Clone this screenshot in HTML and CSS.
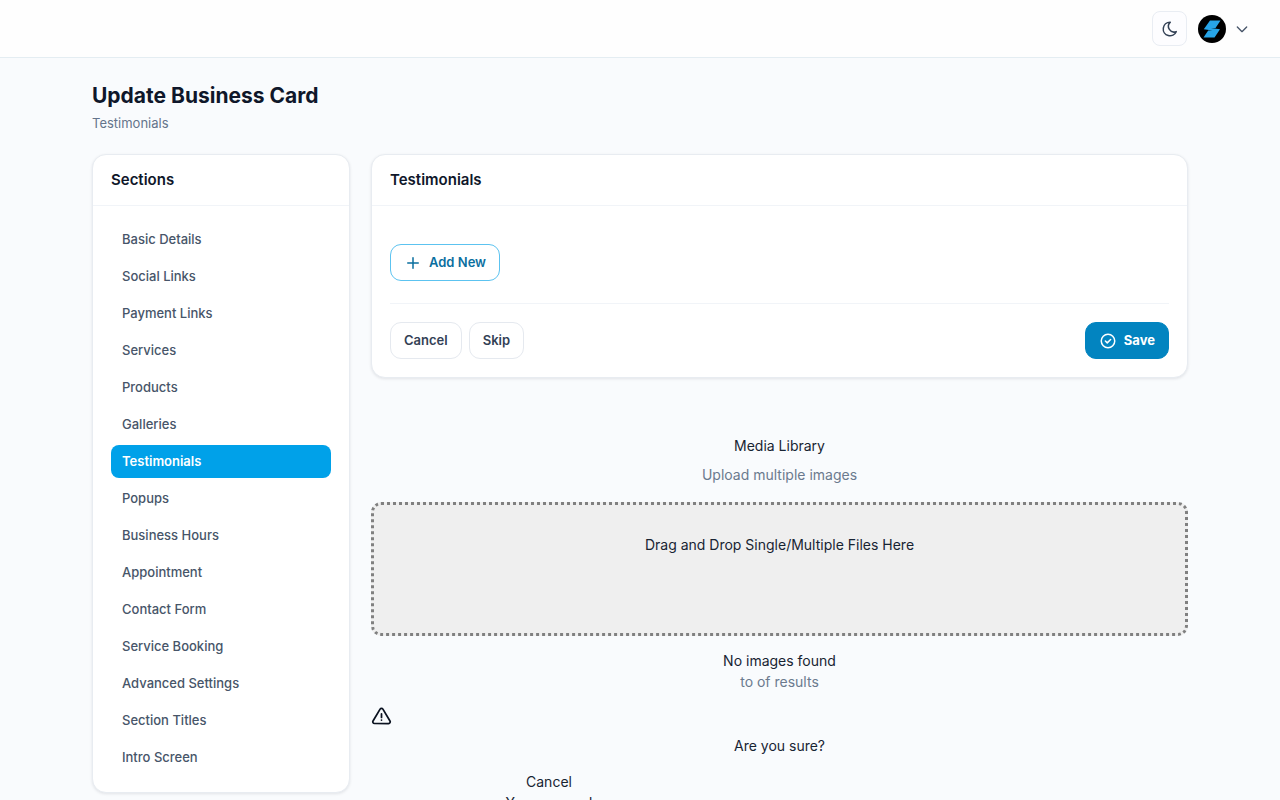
FILE: index.html
```html
<!DOCTYPE html>
<html lang="en">
<head>
    <meta charset="UTF-8">
    <meta name="viewport" content="width=device-width, initial-scale=1.0">
    <title>Update Business Card</title>
    <link rel="stylesheet" href="styles.css">
</head>
<body>
    <header class="topbar">
        <button type="button" class="theme-toggle" aria-label="Dark mode">
            <svg width="18" height="18" viewBox="0 0 24 24" fill="none" stroke="currentColor" stroke-width="2" stroke-linecap="round" stroke-linejoin="round">
                <path d="M12 3c.13 0 .26 0 .39 0a7.5 7.5 0 0 0 7.92 12.45A9 9 0 1 1 12 3z"/>
            </svg>
        </button>
        <button type="button" class="user-menu" aria-label="Account">
            <svg width="28" height="28" viewBox="0 0 28 28">
                <circle cx="14" cy="14" r="14" fill="#000"/>
                <path d="M12 5.5h10.5l-5 7.5h-4.5l9 1.2l-5.500 8.300h-11l4.700-7h4.300l-8.700-1.300z" fill="#27a5e8"/>
            </svg>
            <svg class="chevron" width="16" height="16" viewBox="0 0 24 24" fill="none" stroke="currentColor" stroke-width="2" stroke-linecap="round" stroke-linejoin="round">
                <path d="M5 9l7 7l7 -7"/>
            </svg>
        </button>
    </header>

    <div class="container">
        <div class="page-header">
            <h1>Update Business Card</h1>
            <p>Testimonials</p>
        </div>

        <div class="layout">
            <aside class="card">
                <h2 class="card-header">Sections</h2>
                <nav class="sections">
                    <a href="#">Basic Details</a>
                    <a href="#">Social Links</a>
                    <a href="#">Payment Links</a>
                    <a href="#">Services</a>
                    <a href="#">Products</a>
                    <a href="#">Galleries</a>
                    <a href="#" class="active">Testimonials</a>
                    <a href="#">Popups</a>
                    <a href="#">Business Hours</a>
                    <a href="#">Appointment</a>
                    <a href="#">Contact Form</a>
                    <a href="#">Service Booking</a>
                    <a href="#">Advanced Settings</a>
                    <a href="#">Section Titles</a>
                    <a href="#">Intro Screen</a>
                </nav>
            </aside>

            <main>
                <form class="card">
                    <h2 class="card-header">Testimonials</h2>
                    <div class="card-body">
                        <button type="button" class="btn btn-outline">
                            <svg width="18" height="18" viewBox="0 0 24 24" fill="none" stroke="currentColor" stroke-width="2" stroke-linecap="round">
                                <path d="M12 5v14M5 12h14"/>
                            </svg>
                            Add New
                        </button>
                        <div class="form-actions">
                            <button type="button" class="btn">Cancel</button>
                            <button type="button" class="btn">Skip</button>
                            <button type="submit" class="btn btn-primary">
                                <svg width="18" height="18" viewBox="0 0 24 24" fill="none" stroke="currentColor" stroke-width="2" stroke-linecap="round" stroke-linejoin="round">
                                    <circle cx="12" cy="12" r="9"/>
                                    <path d="M8.500 12l2.500 2.500l4.500 -4.500"/>
                                </svg>
                                Save
                            </button>
                        </div>
                    </div>
                </form>

                <section class="media">
                    <h3>Media Library</h3>
                    <p class="muted">Upload multiple images</p>
                    <button type="button" class="dropzone">Drag and Drop Single/Multiple Files Here</button>
                    <p>No images found</p>
                    <p class="muted">to of results</p>
                </section>

                <!-- Delete confirmation -->
                <section class="confirm">
                    <svg width="21" height="21" viewBox="0 0 24 24" fill="none" stroke="#0b1220" stroke-width="2" stroke-linecap="round" stroke-linejoin="round">
                        <path d="M12 9v4M12 16v.01"/>
                        <path d="M10.4 3.6L2.3 17.1a1.9 1.9 0 0 0 1.6 2.9h16.2a1.9 1.9 0 0 0 1.6 -2.9L13.6 3.6a1.9 1.9 0 0 0 -3.2 0z"/>
                    </svg>
                    <h3>Are you sure?</h3>
                    <div class="confirm-actions">
                        <a href="#">Cancel</a>
                        <a href="#">Yes, proceed</a>
                    </div>
                </section>
            </main>
        </div>
    </div>
</body>
</html>
```

FILE: styles.css
```css
* {
    box-sizing: border-box;
}
body {
    margin: 0;
    font-family: Inter, "Liberation Sans", sans-serif;
    font-size: 14px;
    line-height: 21px;
    color: #182433;
    background-color: #f9fbfd;
}
h1, h2, h3, p {
    margin: 0;
}
button {
    font: inherit;
    color: inherit;
    cursor: pointer;
}
a {
    color: inherit;
    text-decoration: none;
}
svg {
    display: block;
    flex: none;
}

/* Top bar */
.topbar {
    display: flex;
    justify-content: flex-end;
    align-items: center;
    gap: 11px;
    height: 58px;
    padding: 0 30px;
    background-color: #fefefe;
    border-bottom: 1px solid #e4edf2;
}
.theme-toggle {
    display: flex;
    align-items: center;
    justify-content: center;
    width: 35px;
    height: 35px;
    padding: 0;
    color: #334155;
    background-color: #fdfdff;
    border: 1px solid #e9edf3;
    border-radius: 8px;
}
.user-menu {
    display: flex;
    align-items: center;
    gap: 8px;
    padding: 0;
    color: #475569;
    background: none;
    border: none;
}

/* Page */
.container {
    max-width: 1136px;
    margin: 0 auto;
    padding: 24px 20px 40px;
}
.page-header {
    margin-bottom: 21px;
}
.page-header h1 {
    font-size: 21px;
    font-weight: 700;
    line-height: 28px;
    color: #0f172a;
}
.page-header p {
    margin-top: 3px;
    font-size: 13px;
    line-height: 20px;
    color: #64748b;
}
.layout {
    display: grid;
    grid-template-columns: 258px 1fr;
    gap: 21px;
    align-items: start;
}
.card {
    background-color: #ffffff;
    border: 1px solid #e8ecf1;
    border-radius: 14px;
    box-shadow: 0 1px 3px rgba(15, 23, 42, 0.1);
}
.card-header {
    padding: 15px 18px;
    font-size: 15px;
    font-weight: 600;
    line-height: 20px;
    color: #0f172a;
    border-bottom: 1px solid #f1f4f8;
}
.sections {
    display: flex;
    flex-direction: column;
    gap: 4px;
    padding: 17px 18px 18px;
}
.sections a {
    padding: 6px 11px;
    font-size: 13px;
    font-weight: 500;
    color: #475569;
    border-radius: 8px;
}
.sections a.active {
    font-weight: 600;
    color: #ffffff;
    background-color: #00a1e9;
}
.card-body {
    padding: 38px 18px 18px;
}

/* Buttons */
.btn {
    display: flex;
    align-items: center;
    gap: 7px;
    padding: 8px 13px;
    font-size: 13px;
    font-weight: 600;
    line-height: 19px;
    color: #334155;
    background-color: #ffffff;
    border: 1px solid #e5e9ef;
    border-radius: 11px;
}
.btn-outline {
    color: #0b6f9f;
    border-color: #5cc3f0;
}
.btn-primary {
    margin-left: auto;
    font-weight: 700;
    color: #ffffff;
    background-color: #0284c0;
    border-color: #0284c0;
}
.form-actions {
    display: flex;
    gap: 7px;
    margin-top: 22px;
    padding-top: 18px;
    border-top: 1px solid #f1f4f8;
}

/* Media library */
.media {
    margin-top: 57px;
    text-align: center;
}
.media h3, .confirm h3 {
    font-size: 14px;
    font-weight: 400;
}
.media h3 {
    margin-bottom: 8px;
}
.muted {
    color: #6b7a8e;
}
.dropzone {
    display: block;
    width: 100%;
    height: 134px;
    margin: 17px 0 14px;
    padding: 0 0 50px;
    background-color: #efefef;
    border: 3px dotted #808080;
    border-radius: 10px;
}

/* Delete confirmation */
.confirm {
    margin-top: 14px;
    text-align: center;
}
.confirm h3 {
    margin-top: 8px;
}
.confirm-actions {
    width: 356px;
    margin-top: 15px;
}
.confirm-actions a {
    display: block;
}
```
